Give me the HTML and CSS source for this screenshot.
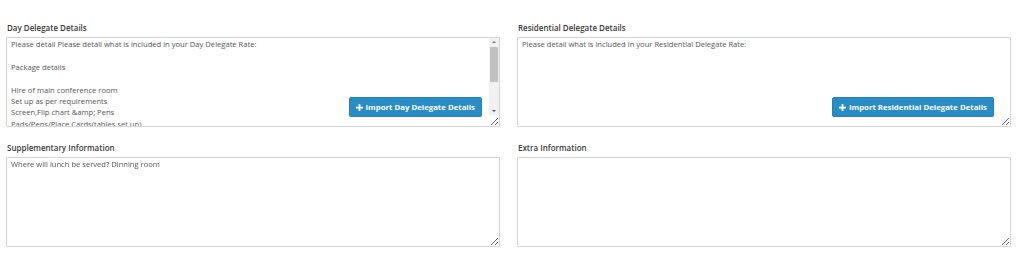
FILE: index.html
```html
<!DOCTYPE html>
<html lang="en">
<head>
  <meta charset="UTF-8">
  <title>Delegate Details</title>
  <link rel="stylesheet" href="styles.css">
</head>
<body>
  <div class="details">
    <div class="field">
      <label for="day">Day Delegate Details</label>
      <div class="box">
        <textarea id="day" class="scroll">Please detail Please detail what is included in your Day Delegate Rate:

Package details

Hire of main conference room
Set up as per requirements
Screen,Flip chart &amp;amp; Pens
Pads/Pens/Place Cards(tables set up)
Tea/Coffee on arrival
Lunch</textarea>
        <!-- barra de scroll dibujada, el navegador headless no la pinta -->
        <div class="fake-bar">
          <span class="arrow up"></span>
          <span class="thumb"></span>
          <span class="arrow down"></span>
        </div>
        <button type="button" class="import import-day">
          <svg width="8" height="8" viewBox="0 0 8 8"><path d="M3 0h2v3h3v2H5v3H3V5H0V3h3z" fill="#fff"/></svg>
          Import Day Delegate Details
        </button>
      </div>
    </div>
    <div class="field">
      <label for="res">Residential Delegate Details</label>
      <div class="box">
        <textarea id="res">Please detail what is included in your Residential Delegate Rate:</textarea>
        <button type="button" class="import import-res">
          <svg width="8" height="8" viewBox="0 0 8 8"><path d="M3 0h2v3h3v2H5v3H3V5H0V3h3z" fill="#fff"/></svg>
          Import Residential Delegate Details
        </button>
      </div>
    </div>
    <div class="field">
      <label for="sup">Supplementary Information</label>
      <div class="box">
        <textarea id="sup">Where will lunch be served? Dinning room</textarea>
      </div>
    </div>
    <div class="field">
      <label for="extra">Extra Information</label>
      <div class="box">
        <textarea id="extra"></textarea>
      </div>
    </div>
  </div>
</body>
</html>
```
FILE: styles.css
```css
/* Formulario de detalles de delegados */
body {
  margin: 0;
  padding: 22px 0 0 6px;
  background: #fff;
  font-family: "Open Sans", sans-serif;
}
.details {
  display: grid;
  grid-template-columns: 494px 494px;
  column-gap: 17px;
  row-gap: 15px;
}
label {
  display: block;
  font-size: 8px;
  font-weight: 600;
  color: #3a3a3a;
  line-height: 11px;
  margin: 0 0 4px 1px;
}
.box {
  position: relative;
  height: 90px;
}
textarea {
  width: 100%;
  height: 90px;
  box-sizing: border-box;
  border: 1px solid #d4d4d4;
  border-radius: 1px;
  padding: 1px 4px;
  font-family: "Open Sans", sans-serif;
  font-size: 7.6px;
  line-height: 11.4px;
  color: #555;
  background: #fff;
  resize: vertical;
  margin: 0;
  display: block;
}
.scroll {
  scrollbar-width: none;
  padding-right: 14px;
}
.fake-bar {
  position: absolute;
  top: 1px;
  right: 1px;
  bottom: 12px;
  width: 10px;
  background: #f1f1f1;
  display: flex;
  flex-direction: column;
  align-items: center;
}
.fake-bar .thumb {
  width: 8px;
  height: 35px;
  background: #c1c1c1;
  margin-top: 1px;
}
.fake-bar .arrow {
  width: 0;
  height: 0;
  border-left: 2px solid transparent;
  border-right: 2px solid transparent;
  margin: 3px 0;
}
.fake-bar .up {
  border-bottom: 2px solid #777;
}
.fake-bar .down {
  border-top: 2px solid #555;
  margin-top: auto;
}
.import {
  position: absolute;
  top: 60px;
  height: 20px;
  padding: 0 6px;
  border: 1px solid #2380b4;
  border-radius: 2px;
  background: #2a8cc4;
  color: #fff;
  font-family: "Open Sans", sans-serif;
  font-size: 7.8px;
  font-weight: 700;
  cursor: pointer;
  display: flex;
  align-items: center;
  gap: 3px;
}
.import svg {
  width: 7px;
  height: 7px;
}
.import-day {
  right: 18px;
}
.import-res {
  right: 17px;
}
```
